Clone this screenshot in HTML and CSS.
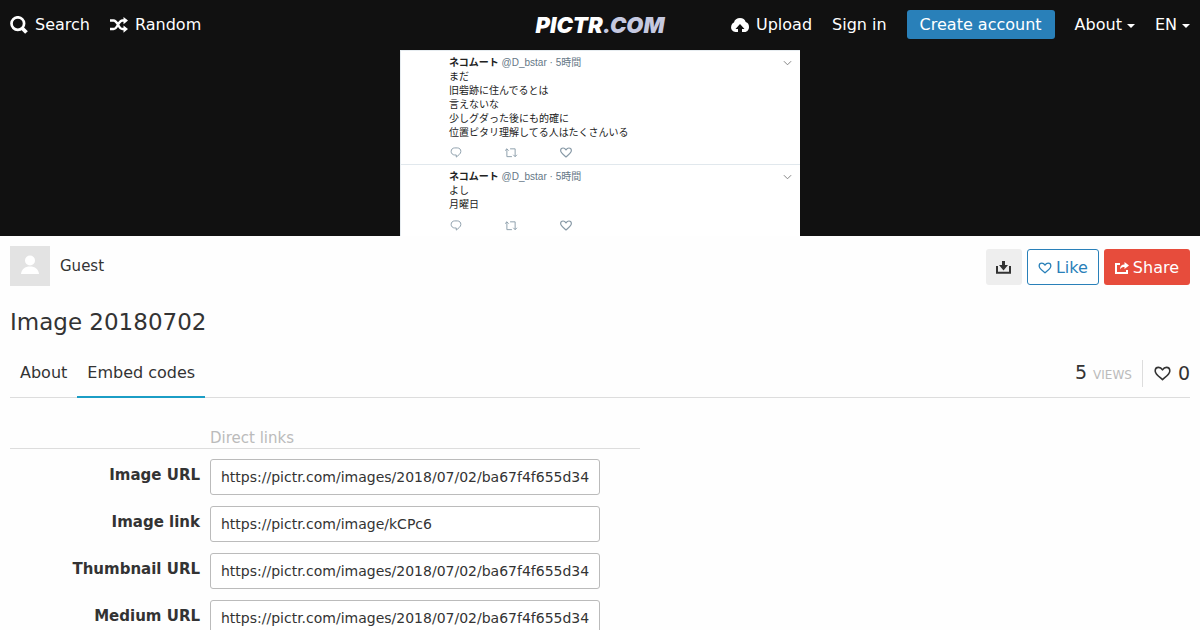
FILE: index.html
```html
<!DOCTYPE html>
<html lang="en">
<head>
<meta charset="utf-8">
<title>Image 20180702 - Pictr.com</title>
<link rel="stylesheet" href="styles.css">
</head>
<body>
<svg class="symbols" aria-hidden="true">
  <symbol id="heart" viewBox="0 0 18 16"><path d="M9 14.500C5 11 1.200 8.500 1.200 5.200 1.200 3 2.800 1.500 4.800 1.500 6.800 1.500 8 2.600 9 4.200c1-1.600 2.200-2.700 4.200-2.700s3.600 1.500 3.600 3.700c0 3.300-3.800 5.800-7.800 9.300z" fill="none" stroke="currentColor" stroke-width="1.700" stroke-linejoin="round"/></symbol>
  <symbol id="reply" viewBox="0 0 12 12"><path d="M4.500 1h3C9.800 1 11.300 2.600 11.300 4.800 11.300 7.500 8.500 9 6.300 11V8.700H4.500C2.300 8.700.7 7 .7 4.800S2.300 1 4.500 1z" fill="none" stroke="currentColor" stroke-width="1"/></symbol>
  <symbol id="retweet" viewBox="0 0 14 12"><path d="M.5 4 2.500 2l2 2M2.500 2v8.500H8M13.500 8.500l-2 2-2-2M11.500 10.500V2H6" fill="none" stroke="currentColor" stroke-width="1"/></symbol>
  <symbol id="chevron" viewBox="0 0 10 6"><path d="m1 1 4 4 4-4" fill="none" stroke="currentColor"/></symbol>
</svg>
<header class="top-bar">
  <nav class="nav nav-left">
    <a href="#"><svg class="icon-search" viewBox="0 0 18 18"><circle cx="7.800" cy="7.600" r="6.300" fill="none" stroke="currentColor" stroke-width="2.700"/><path d="m12 12 4.500 4.500" stroke="currentColor" stroke-width="3.800"/></svg>Search</a>
    <a href="#"><svg class="icon-shuffle" viewBox="0 0 18 16"><path d="M0 3.500h3.500C8 3.500 8 12 12.500 12H14M0 12h3.500C8 12 8 3.500 12.500 3.500H14" fill="none" stroke="currentColor" stroke-width="2.400"/><path d="m13.500 0 4.500 3.600-4.500 3.600zM13.500 8.500l4.500 3.600-4.500 3.600z" fill="currentColor"/></svg>Random</a>
  </nav>
  <a class="logo" href="#">PICTR<span>.COM</span></a>
  <nav class="nav nav-right">
    <a href="#"><svg class="icon-cloud" viewBox="0 0 18 14"><path fill="currentColor" fill-rule="evenodd" d="M4.500 14A4.500 4.500 0 0 1 .2 8.500C.2 6.500 1.600 5 3 4.400 3.500 1.800 6 0 9 0s5 1.500 5.700 4C17 4.600 18 6.500 18 9c0 2.800-1.800 5-4.300 5H11V11h2.500L9 6 4.500 11H7v3z"/></svg>Upload</a>
    <a href="#">Sign in</a>
    <a class="signup" href="#">Create account</a>
    <a class="drop" href="#">About<i class="caret"></i></a>
    <a class="drop" href="#">EN<i class="caret"></i></a>
  </nav>
</header>
<section class="viewer">
  <div class="picture" lang="ja">
    <article class="tweet">
      <header><p><b>ネコムート</b> <span>@D_bstar · 5時間</span></p><svg class="chevron"><use href="#chevron"/></svg></header>
      <p>まだ<br>旧砦跡に住んでるとは<br>言えないな<br>少しグダった後にも的確に<br>位置ピタリ理解してる人はたくさんいる</p>
      <footer><svg><use href="#reply"/></svg><svg><use href="#retweet"/></svg><svg><use href="#heart"/></svg></footer>
    </article>
    <article class="tweet">
      <header><p><b>ネコムート</b> <span>@D_bstar · 5時間</span></p><svg class="chevron"><use href="#chevron"/></svg></header>
      <p>よし<br>月曜日</p>
      <footer><svg><use href="#reply"/></svg><svg><use href="#retweet"/></svg><svg><use href="#heart"/></svg></footer>
    </article>
  </div>
</section>
<main class="content">
  <div class="owner-row">
    <div class="owner"><span class="avatar"><svg viewBox="0 0 40 40"><circle cx="20" cy="14.500" r="5"/><path d="M11 28c.5-5 4-7.500 9-7.500s8.500 2.500 9 7.500z"/></svg></span>Guest</div>
    <div class="actions">
      <button class="btn btn-download" aria-label="Download"><svg viewBox="0 0 15 13"><path d="M1 5v6.800h13V5" fill="none" stroke="currentColor" stroke-width="2"/><path d="M6 0h3v4h3L7.500 9.500 3 4h3z" fill="currentColor"/></svg></button>
      <button class="btn btn-like"><svg><use href="#heart"/></svg>Like</button>
      <button class="btn btn-share"><svg viewBox="0 0 14 12"><path d="M5 2H1v9h11V8" fill="none" stroke="currentColor" stroke-width="2"/><path d="M9.500 0 14 3.500 9.500 7V5C7.500 5 6.200 5.500 5 7.500c0-3.500 1.500-5 4.500-5z" fill="currentColor"/></svg>Share</button>
    </div>
  </div>
  <h1>Image 20180702</h1>
  <div class="tab-row">
    <nav class="tabs"><a href="#">About</a><a class="current" href="#">Embed codes</a></nav>
    <div class="stats"><span class="views">5 <small>VIEWS</small></span><span class="likes"><svg><use href="#heart"/></svg>0</span></div>
  </div>
  <form class="codes">
    <h2>Direct links</h2>
    <div class="field"><label for="url">Image URL</label><input id="url" readonly value="https://pictr.com/images/2018/07/02/ba67f4f655d34"></div>
    <div class="field"><label for="link">Image link</label><input id="link" readonly value="https://pictr.com/image/kCPc6"></div>
    <div class="field"><label for="thumb">Thumbnail URL</label><input id="thumb" readonly value="https://pictr.com/images/2018/07/02/ba67f4f655d34"></div>
    <div class="field"><label for="medium">Medium URL</label><input id="medium" readonly value="https://pictr.com/images/2018/07/02/ba67f4f655d34"></div>
  </form>
</main>
</body>
</html>
```
FILE: styles.css
```css
* { box-sizing: border-box; }
body { margin: 0; background: #fefefe; color: #333; font: 16px/20px "DejaVu Sans", sans-serif; }
a { color: inherit; text-decoration: none; }
p, h1, h2 { margin: 0; font-weight: 400; }
.symbols { position: absolute; width: 0; height: 0; }

.top-bar { display: grid; grid-template-columns: 1fr auto 1fr; align-items: center; height: 50px; padding: 0 10px 1px; background: #111; color: #fff; }
.nav { display: flex; align-items: center; gap: 20px; white-space: nowrap; }
.nav a { display: flex; align-items: center; }
.nav-right { justify-content: flex-end; }
.icon-search { width: 18px; height: 18px; margin-right: 7px; }
.icon-shuffle { width: 18px; height: 16px; margin-right: 7px; }
.icon-cloud { width: 18px; height: 14px; margin-right: 7px; }
.logo { font: italic 900 22px/28px Inter, sans-serif; }
.logo span { color: #c5c9e0; }
.nav .signup { height: 29px; padding: 0 13px; border-radius: 3px; background: #2980b9; }
.caret { margin: 3px 0 0 5px; border: 4px solid transparent; border-top-color: currentColor; border-bottom: 0; }

.viewer { display: flex; justify-content: center; background: #111; }
.picture { width: 400px; border-top: 1px solid #e6ecf0; border-left: 1px solid #e6ecf0; background: #fff; color: #222; font: 10px/14px "Liberation Sans", "Noto Sans CJK JP", sans-serif; }
.tweet { padding: 5px 8px 6px 48px; }
.tweet + .tweet { padding-bottom: 5px; border-top: 1px solid #e1e8ed; }
.tweet header { display: flex; justify-content: space-between; align-items: center; }
.tweet span { color: #657786; }
.tweet footer { display: flex; gap: 41px; margin-top: 7px; color: #8799a6; }
.tweet footer svg { width: 14px; height: 11px; }
.tweet + .tweet footer { margin-top: 8px; }
.tweet .chevron { width: 9px; height: 6px; color: #777; }

.content { padding: 10px; }
.owner-row, .owner, .actions, .tab-row, .tabs, .stats, .likes { display: flex; align-items: center; }
.owner-row, .tab-row { justify-content: space-between; }
.owner { gap: 10px; font-size: 15px; }
.avatar { width: 40px; height: 40px; background: #e3e3e3; fill: #fff; }
.avatar svg { display: block; }
.actions { gap: 5px; }
.btn { display: flex; align-items: center; justify-content: center; gap: 4px; height: 36px; margin: 2px 0 0; padding: 1px 10px 0; border: 1px solid transparent; border-radius: 3px; font: inherit; }
.btn svg { width: 14px; height: 12px; }
.btn-download { width: 36px; background: #eee; color: #333; }
.btn-download svg { flex: none; width: 15px; height: 13px; }
.btn-like { border-color: #2980b9; background: #fff; color: #2980b9; }
.btn-share { background: #e74c3c; color: #fff; }
h1 { margin: 20px 0 11px; font-size: 23px; line-height: 32px; }
.tab-row { height: 49px; border-bottom: 1px solid #ddd; }
.tabs { height: 49px; }
.tabs a { height: 49px; padding: 14px 10px 0; }
.tabs .current { border-bottom: 2px solid #1b9dc5; }
.stats { font-size: 19px; line-height: 24px; }
.stats small { color: #bbb; font-size: 12px; }
.views { padding-right: 10px; border-right: 1px solid #ddd; }
.likes { gap: 7px; padding-left: 11px; }
.likes svg { width: 17px; height: 15px; }

.codes { max-width: 630px; margin-top: 30px; }
h2 { padding-left: 200px; border-bottom: 1px solid #ddd; color: #bbb; font-size: 15px; line-height: 20px; }
.field { display: flex; margin-top: 11px; }
h2 + .field { margin-top: 10px; }
label { width: 190px; margin-right: 10px; padding-top: 6px; font-size: 15px; font-weight: 700; text-align: right; }
input { width: 390px; height: 36px; padding: 0 10px; border: 1px solid #bbb; border-radius: 3px; background: #fff; color: #333; font: 14px/20px "DejaVu Sans", sans-serif; }
```
